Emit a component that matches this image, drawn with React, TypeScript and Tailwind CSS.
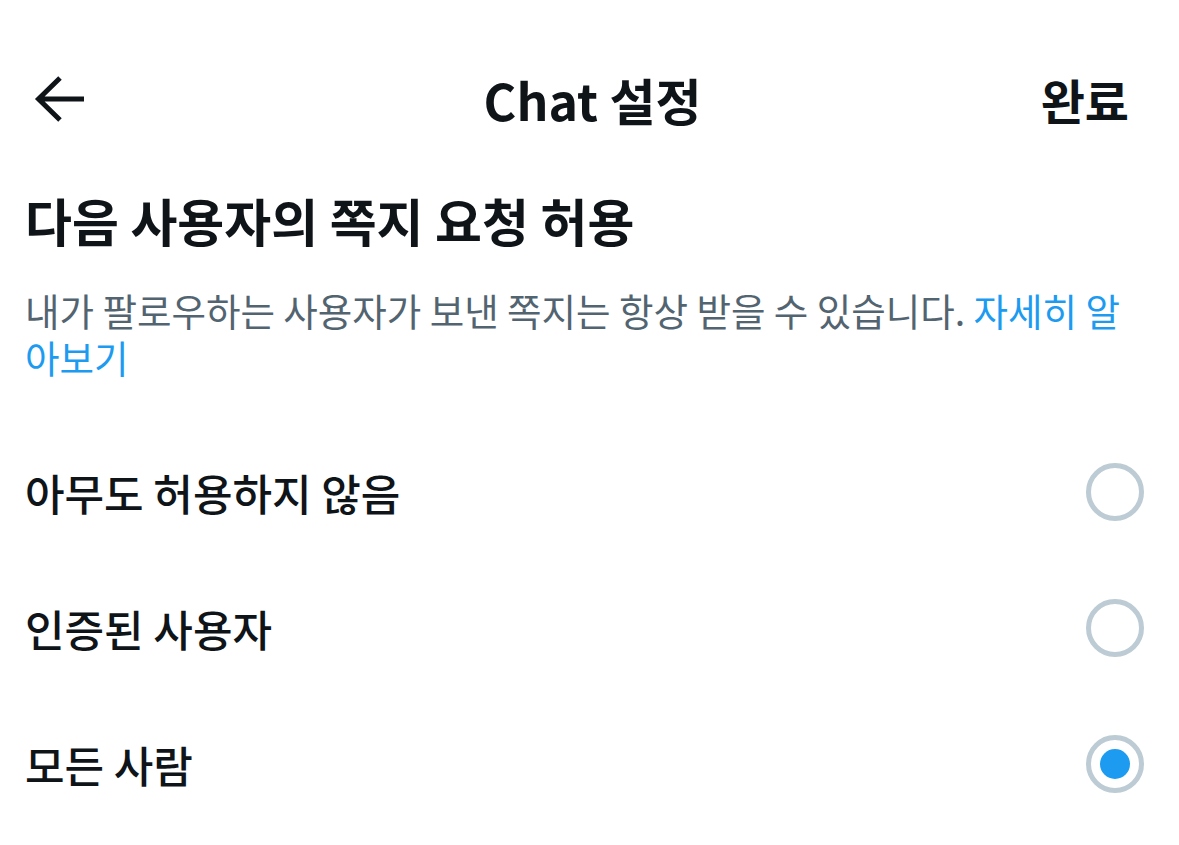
import { useState } from "react";

const options = ["아무도 허용하지 않음", "인증된 사용자", "모든 사람"];

function Radio({ checked }: { checked: boolean }) {
  return (
    <div className="w-[58px] h-[58px] rounded-full border-[5px] border-[#bccbd4] flex items-center justify-center">
      {checked && <div className="w-[30px] h-[30px] rounded-full bg-[#1d9bf0]" />}
    </div>
  );
}

export default function App() {
  const [selected, setSelected] = useState(2);

  return (
    <div
      className="w-[1179px] h-[845px] bg-white text-[#0f1419] overflow-hidden"
      style={{ fontFamily: '"Noto Sans CJK KR", "Noto Sans", sans-serif' }}
    >
      {/* header */}
      <div className="pt-[52px] pl-[34px] pr-[50px] h-[146px] flex items-start">
        <div className="h-[94px] w-full flex items-center justify-between relative">
          <button className="w-[52px] h-[52px] flex items-center justify-center">
            <svg width="52" height="52" viewBox="0 0 52 52" fill="none">
              <path
                d="M50 26H5M26 5L4.5 26L26 47"
                stroke="#0f1419"
                strokeWidth="5"
                strokeLinecap="butt"
                strokeLinejoin="miter"
              />
            </svg>
          </button>
          <div className="absolute left-0 right-0 text-center text-[50px] leading-[60px] font-bold pointer-events-none pl-[22px]">
            Chat 설정
          </div>
          <button className="text-[48px] leading-[60px] font-bold">완료</button>
        </div>
      </div>

      {/* section */}
      <div className="pl-[25px] pr-[40px]">
        <h1 className="mt-[44px] text-[51px] leading-[60px] font-bold">
          다음 사용자의 쪽지 요청 허용
        </h1>
        <p className="mt-[36px] text-[37.5px] leading-[47px] text-[#536471]">
          내가 팔로우하는 사용자가 보낸 쪽지는 항상 받을 수 있습니다.{" "}
          <span className="text-[#1d9bf0]">자세히 알아보기</span>
        </p>
      </div>

      <div className="mt-[44px] pl-[25px] pr-[35px]">
        {options.map((o, i) => (
          <div
            key={o}
            onClick={() => setSelected(i)}
            className="h-[136px] flex items-center justify-between cursor-pointer"
          >
            <span className="text-[43px] font-medium">{o}</span>
            <Radio checked={selected === i} />
          </div>
        ))}
      </div>
    </div>
  );
}
